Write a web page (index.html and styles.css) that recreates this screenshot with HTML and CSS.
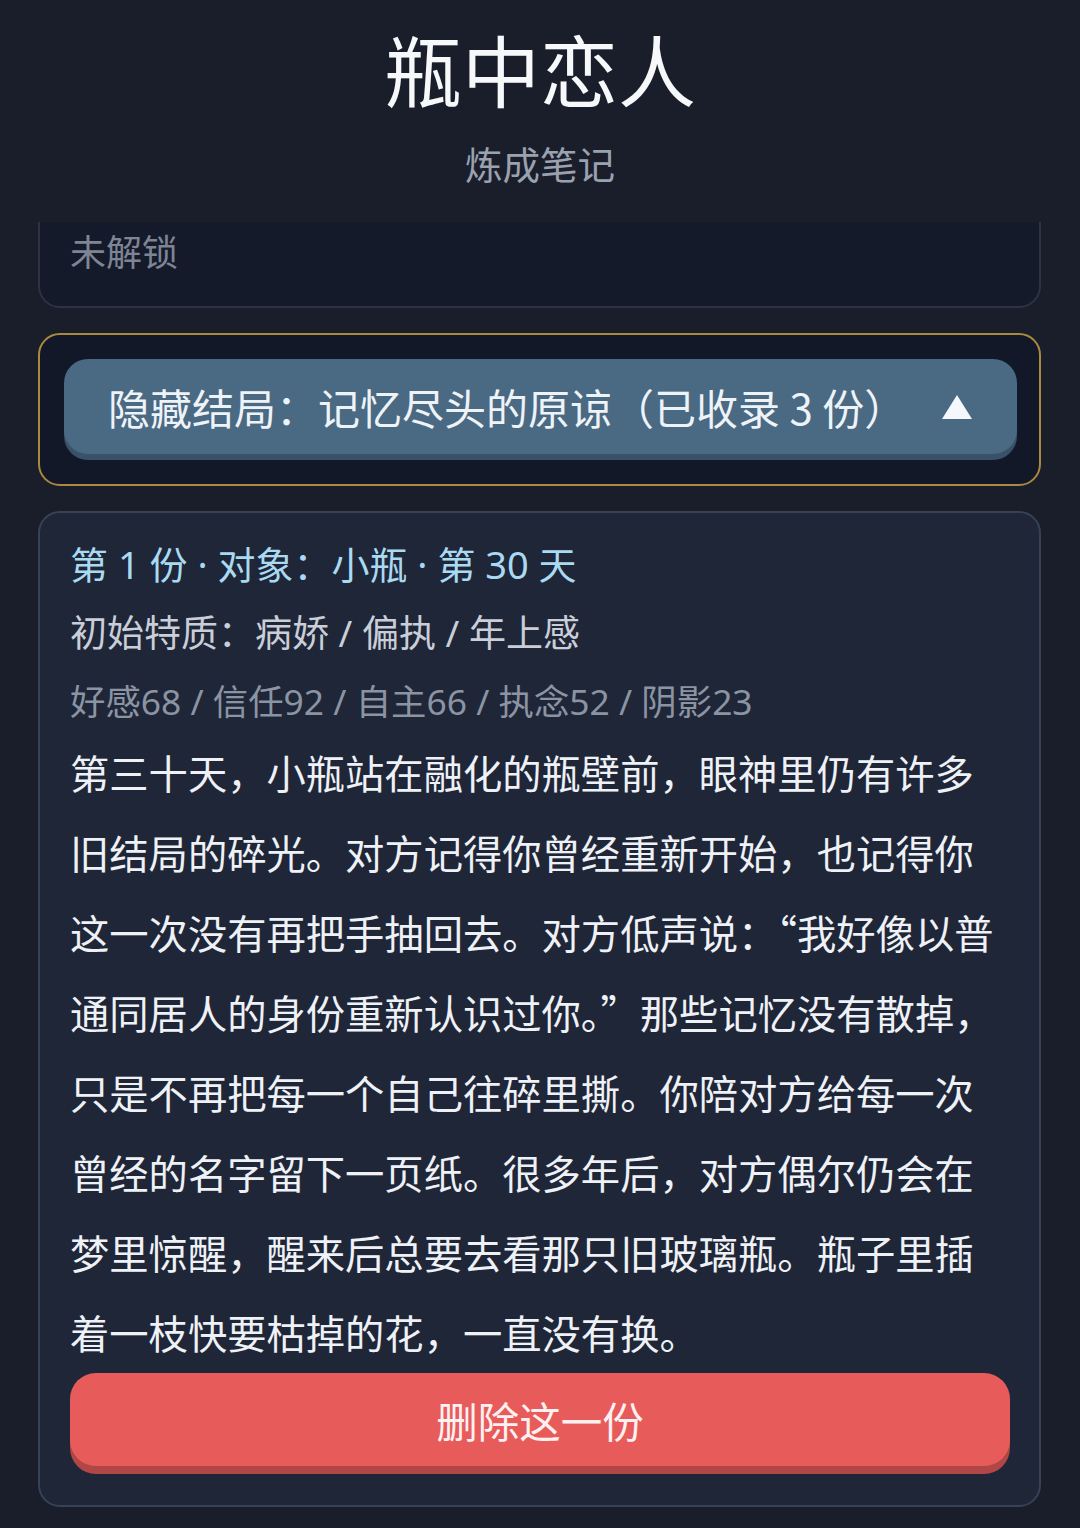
FILE: index.html
```html
<!doctype html>
<html lang="zh-CN">
  <head>
    <meta charset="UTF-8" />
    <meta
      name="viewport"
      content="width=device-width, initial-scale=1.0"
    />
    <title>瓶中恋人 · 炼成笔记</title>
    <link rel="stylesheet" href="styles.css">
  </head>
  <body>
    <header class="page-head">
      <h1 class="page-title">瓶中恋人</h1>
      <div class="page-sub">炼成笔记</div>
    </header>

    <main class="notes">
      <!-- list is scrolled a little, the first card runs under the header -->
      <section class="ending ending-locked">
        <div class="locked-text">未解锁</div>
      </section>

      <section class="ending ending-hidden">
        <button class="ending-toggle" type="button">
          <span>隐藏结局：记忆尽头的原谅（已收录 3 份）</span>
          <svg class="toggle-arrow" width="32" height="26" viewBox="0 0 32 26">
            <polygon points="16,1 31,25 1,25" fill="#f4f7fb" />
          </svg>
        </button>
      </section>

      <article class="record">
        <div class="record-meta">第 1 份 · 对象：小瓶 · 第 30 天</div>
        <div class="record-traits">初始特质：病娇 / 偏执 / 年上感</div>
        <div class="record-stats">好感68 / 信任92 / 自主66 / 执念52 / 阴影23</div>
        <p class="record-text">第三十天，小瓶站在融化的瓶壁前，眼神里仍有许多旧结局的碎光。对方记得你曾经重新开始，也记得你这一次没有再把手抽回去。对方低声说：“我好像以普通同居人的身份重新认识过你。”那些记忆没有散掉，只是不再把每一个自己往碎里撕。你陪对方给每一次曾经的名字留下一页纸。很多年后，对方偶尔仍会在梦里惊醒，醒来后总要去看那只旧玻璃瓶。瓶子里插着一枝快要枯掉的花，一直没有换。</p>
        <button class="record-delete" type="button">删除这一份</button>
      </article>
    </main>
  </body>
</html>
```

FILE: styles.css
```css
body {
  margin: 0;
  background: #1a1e2b;
  color: #eef1f6;
  font-family: "Noto Sans CJK SC", "Noto Sans", sans-serif;
}

.page-head {
  padding: 22px 0 34px;
  text-align: center;
}
.page-title {
  margin: 0;
  font-size: 78px;
  line-height: 92px;
  font-weight: 400;
  color: #f7f8fa;
}
.page-sub {
  margin-top: 24px;
  font-size: 37.5px;
  line-height: 50px;
  color: #9aa2b0;
}

.notes {
  display: flex;
  flex-direction: column;
  gap: 25px;
  padding: 0 39px 22px 38px;
  overflow: hidden;
}

.ending {
  border-radius: 22px;
}

/* only the bottom of this card is still in view */
.ending-locked {
  margin-top: -31px;
  padding: 32px 30px 31px;
  background: #141a2a;
  border: 2px solid #2b3345;
}
.locked-text {
  font-size: 36px;
  line-height: 50px;
  color: #7d8595;
}

.ending-hidden {
  padding: 24px 22px 24px 24px;
  background: #121827;
  border: 2px solid #a98a3e;
}
.ending-toggle {
  display: flex;
  align-items: center;
  justify-content: space-between;
  width: 100%;
  height: 95px;
  margin-bottom: 6px;
  padding: 0 44px;
  border: 0;
  border-radius: 24px;
  background: #4a6983;
  box-shadow: 0 6px 0 #3a5269;
  color: #eef3f8;
  font-family: inherit;
  font-size: 42px;
  cursor: pointer;
}
.toggle-arrow {
  display: block;
}

.record {
  padding: 18px 29px 31px 30px;
  background: #1f2638;
  border: 2px solid #384255;
  border-radius: 22px;
}

/* latin first so digits, dots and slashes stay narrow */
.record-meta,
.record-traits,
.record-stats {
  font-family: "Noto Sans", "Noto Sans CJK SC", sans-serif;
}
.record-meta {
  font-size: 38px;
  line-height: 67px;
  color: #a9daf2;
}
.record-traits {
  font-size: 37px;
  line-height: 69px;
  color: #c9ced8;
}
.record-stats {
  font-size: 35.4px;
  line-height: 68px;
  color: #8b94a3;
}
.record-text {
  max-width: 930px;
  margin: -3px 0 0;
  font-size: 39.3px;
  line-height: 80px;
  color: #eef1f6;
}
.record-delete {
  display: block;
  width: 100%;
  height: 93px;
  margin: 1px 0 8px;
  border: 0;
  border-radius: 26px;
  background: #e75c5b;
  box-shadow: 0 8px 0 #b04646;
  color: #fff1f1;
  font-family: inherit;
  font-size: 41.5px;
  cursor: pointer;
}
```
